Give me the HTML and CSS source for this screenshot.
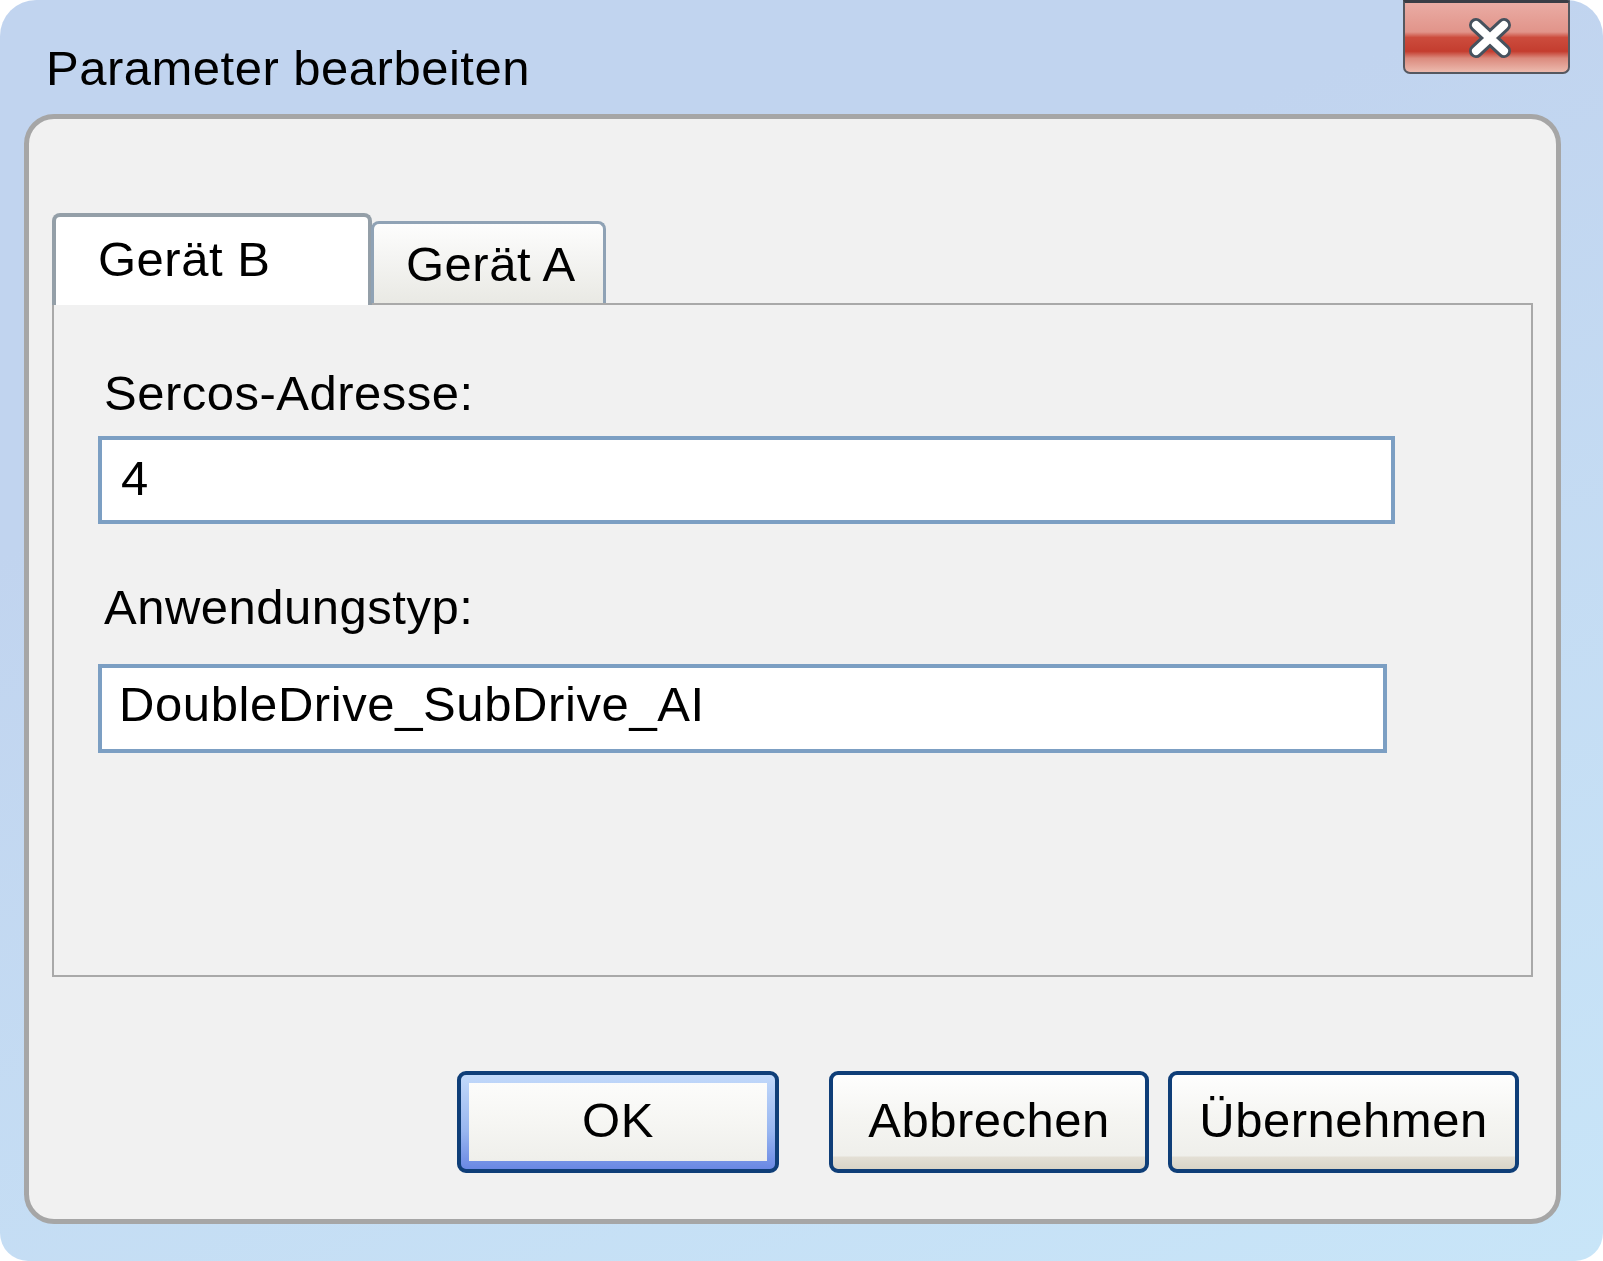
FILE: index.html
```html
<!doctype html>
<html lang="de">

<head>
	<meta charset="UTF-8">
	<title>Parameter bearbeiten</title>
	<link rel="stylesheet" href="styles.css">
</head>

<body>
	<div id="window">
		<div class="titlebar">
			<h1 class="title">Parameter bearbeiten</h1>
			<button class="close" title="Schließen">
				<svg width="46" height="40" viewBox="0 0 46 40">
					<path d="M9 7 L37 33 M37 7 L9 33" stroke="#46525e" stroke-width="14" stroke-linecap="round" fill="none" />
					<path d="M9 7 L37 33 M37 7 L9 33" stroke="#ffffff" stroke-width="8" stroke-linecap="round" fill="none" />
				</svg>
			</button>
		</div>
		<div class="dialog">
			<ul class="tabs">
				<li class="tab active">Gerät B</li>
				<li class="tab">Gerät A</li>
			</ul>
			<div class="panel">
				<label class="label">Sercos-Adresse:</label>
				<div class="field field-addr">4</div>
				<label class="label label-type">Anwendungstyp:</label>
				<div class="field field-type">DoubleDrive_SubDrive_AI</div>
			</div>
			<div class="buttons">
				<button class="btn btn-ok"><span>OK</span></button>
				<button class="btn btn-cancel"><span>Abbrechen</span></button>
				<button class="btn btn-apply"><span>Übernehmen</span></button>
			</div>
		</div>
	</div>
</body>

</html>
```

FILE: styles.css
```css
* {
	padding: 0;
	margin: 0;
	box-sizing: border-box;
}

body {
	background: #fff;
	font-family: "Liberation Sans", Arial, sans-serif;
	color: #000;
	letter-spacing: 0.5px;
}

#window {
	width: 1603px;
	height: 1261px;
	border-radius: 36px 36px 28px 28px;
	background: linear-gradient(160deg, #c1d4ef 30%, #c8e5f8 100%);
	overflow: hidden;
}

/* title bar */
.titlebar {
	height: 114px;
	display: flex;
	justify-content: space-between;
	align-items: flex-start;
	padding: 0 33px 0 46px;
}

.title {
	font-size: 49px;
	font-weight: normal;
	line-height: 56px;
	padding-top: 40px;
}

.close {
	width: 167px;
	height: 74px;
	border: 2px solid #555860;
	border-top: 3px solid #3a3d45;
	border-radius: 0 0 7px 7px;
	background: linear-gradient(#eaaca4 0%, #e1948a 42%, #cc4c3d 50%, #c43d2f 70%, #db8a7d 80%, #ecbaae 100%);
	display: flex;
	align-items: center;
	justify-content: center;
	padding: 0 0 0 6px;
}

/* dialog body */
.dialog {
	margin: 0 42px 0 24px;
	height: 1110px;
	border: 5px solid #a6a6a6;
	border-radius: 30px;
	background: #f1f1f1;
	padding: 94px 23px 0;
}

.tabs {
	list-style: none;
	display: flex;
	align-items: flex-end;
	margin-bottom: -2px;
	position: relative;
	z-index: 1;
}

.tab {
	font-size: 49px;
	line-height: 56px;
	width: 235px;
	height: 82px;
	border: 3px solid #8fa2b5;
	border-bottom: 0;
	border-radius: 8px 8px 0 0;
	background: linear-gradient(#fdfdfd, #e9e9e4);
	padding: 12px 0 0 32px;
	margin: 0 0 2px -1px;
}

.tab.active {
	width: 320px;
	height: 92px;
	border: 4px solid #949fa8;
	border-bottom: 0;
	background: #fff;
	padding: 14px 0 0 42px;
	margin: 0;
}

.panel {
	height: 674px;
	border: 2px solid #a9a9a9;
	padding: 60px 0 0 44px;
}

.label {
	display: block;
	font-size: 49px;
	line-height: 56px;
	margin-left: 6px;
}

.label-type {
	margin-top: 55px;
}

.field {
	background: #fff;
	border: 4px solid #7c9fc3;
	font-size: 49px;
	line-height: 56px;
	letter-spacing: 0.6px;
}

.field-addr {
	width: 1297px;
	height: 88px;
	margin-top: 15px;
	padding: 10px 0 0 19px;
}

.field-type {
	width: 1289px;
	height: 89px;
	margin-top: 29px;
	padding: 8px 0 0 17px;
}

/* buttons */
.buttons {
	display: flex;
	justify-content: flex-end;
	gap: 19px;
	margin-top: 94px;
	padding-right: 14px;
}

.btn {
	display: flex;
	height: 102px;
	padding: 0;
	border: 4px solid #0f3e78;
	border-radius: 9px;
	background: linear-gradient(#fefefe, #f5f5f2 45%, #efefeb calc(100% - 13px), #e3dfd5 calc(100% - 12px), #d9d4c7);
	font: 49px/56px "Liberation Sans", Arial, sans-serif;
	letter-spacing: 0.5px;
	color: #000;
}

.btn span {
	flex: 1;
	display: flex;
	align-items: center;
	justify-content: center;
	padding-bottom: 4px;
}

.btn-ok {
	width: 322px;
	margin-right: 31px;
	padding: 8px;
	background: linear-gradient(#c2d9fa, #98b6f0 60%, #6a88e4);
}

.btn-ok span {
	background: linear-gradient(#fcfcfb, #f6f6f3 50%, #efefeb);
}

.btn-cancel {
	width: 320px;
}

.btn-apply {
	width: 351px;
}
```
